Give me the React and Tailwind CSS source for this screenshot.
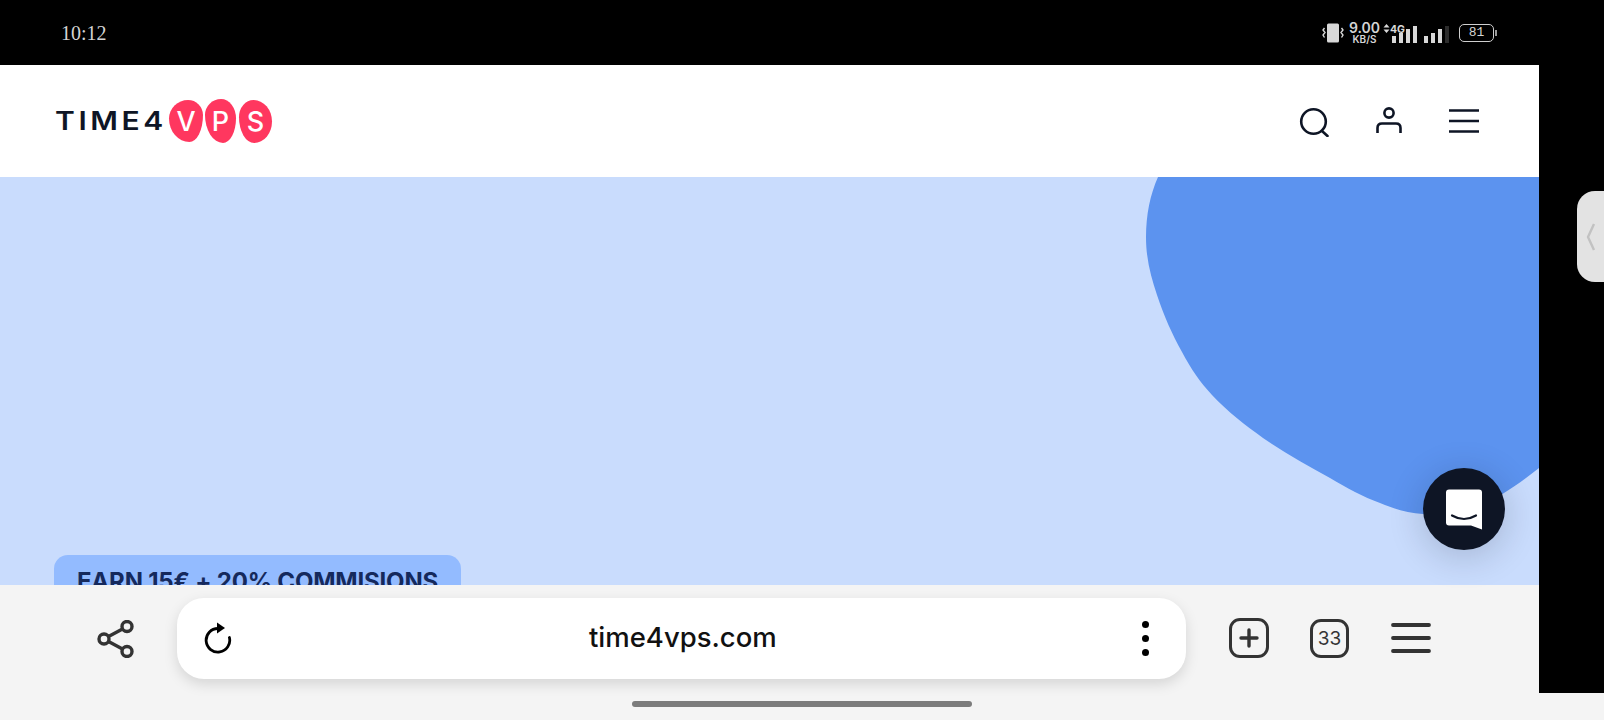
import React from "react";

const inter = "font-['Inter',sans-serif]";

const StatusIcons = () => (
  <div className="flex items-center text-[#d4d4d4] font-['Inter',sans-serif]">
    {/* vibrate */}
    <svg width="22" height="20" viewBox="0 0 22 20" fill="none" className="mr-[5px]">
      <rect x="5" y="0.5" width="12" height="19" rx="1.5" fill="#d8d8d8" />
      <path d="M2.5 5 L1 7 L3 9.5 L1 12 L2.5 14.5 M19.5 5 L21 7 L19 9.5 L21 12 L19.5 14.5" stroke="#d8d8d8" strokeWidth="1.4" />
    </svg>
    <div className="flex flex-col items-center w-[31px] mr-[3px]">
      <span className="text-[14px] font-semibold leading-[12px]">9.00</span>
      <span className="text-[10px] font-semibold leading-[10px]">KB/S</span>
    </div>
    <svg width="68" height="20" viewBox="0 0 68 20" className="mr-[8px]">
      <path d="M3.5 1 L6.5 4.5 H0.5 Z M3.5 10 L0.5 6.5 H6.5 Z" fill="#d8d8d8" />
      <text x="7" y="9.5" fontSize="10.5" fontWeight="700" fill="#d8d8d8" fontFamily="Inter, sans-serif">4G</text>
      <rect x="9" y="13" width="4" height="7" fill="#d8d8d8" />
      <rect x="16" y="10" width="4" height="10" fill="#d8d8d8" />
      <rect x="23" y="6" width="4" height="14" fill="#d8d8d8" />
      <rect x="30" y="3" width="4" height="17" fill="#d8d8d8" />
      <rect x="41" y="13" width="4" height="7" fill="#d8d8d8" />
      <rect x="48" y="10" width="4" height="10" fill="#d8d8d8" />
      <rect x="55" y="6" width="4" height="14" fill="#d8d8d8" />
      <rect x="62" y="3" width="4" height="17" fill="#2c2c2c" />
    </svg>
    <div className="flex items-center">
      <div className="flex items-center justify-center w-[35px] h-[18px] rounded-[5px] border-[1.5px] border-[#cfcfcf] text-[13px] font-['Liberation_Mono',monospace] leading-none">81</div>
      <div className="w-[2px] h-[6px] bg-[#9a9a9a] ml-[1px]" />
    </div>
  </div>
);

const Logo = () => (
  <div className={`flex items-center ${inter}`}>
    <span className="w-[114px] text-[25px] font-semibold tracking-[3px] text-[#0e1525] leading-none whitespace-nowrap origin-left scale-x-[1.2]">TIME4</span>
    <div className="flex items-center text-white text-[27px] font-medium leading-none">
      <div className="flex items-center justify-center w-[34px] h-[42px] bg-[#ff375f] rounded-[56%_44%_40%_60%/44%_36%_64%_56%]">V</div>
      <div className="flex items-center justify-center w-[31px] h-[44px] ml-[2px] bg-[#ff375f] rounded-[52%_48%_42%_58%/36%_44%_56%_64%]">P</div>
      <div className="flex items-center justify-center w-[33px] h-[43px] ml-[3px] bg-[#ff375f] rounded-[44%_56%_54%_46%/40%_50%_50%_60%]">S</div>
    </div>
  </div>
);

const Header = () => (
  <header className="h-[112px] bg-white flex items-center justify-between pl-[55px] pr-[60px]">
    <Logo />
    <div className="flex items-center gap-[46px]">
      <svg width="30" height="30" viewBox="0 0 30 30" fill="none" stroke="#0e1525" strokeWidth="2.6" className="mt-[1px]">
        <circle cx="14.5" cy="14.5" r="12.3" />
        <path d="M23 24 L28.5 29" strokeLinecap="round" />
      </svg>
      <svg width="28" height="32" viewBox="0 0 28 32" fill="none" stroke="#0e1525" strokeWidth="2.6">
        <circle cx="14" cy="8" r="4.6" />
        <path d="M2.5 28 V23 Q2.5 18.5 7 18.5 H21 Q25.5 18.5 25.5 23 V28" />
      </svg>
      <svg width="30" height="26" viewBox="0 0 30 26" fill="none" stroke="#0e1525" strokeWidth="2.6">
        <path d="M0 2.5 H30 M0 13 H30 M0 23.5 H30" />
      </svg>
    </div>
  </header>
);

const Hero = () => (
  <section className="relative h-[408px] bg-[#c9dcfd] overflow-hidden pt-[378px] pl-[54px]">
    <svg className="absolute top-0 left-0" width="1539" height="408" viewBox="0 0 1539 408">
      <path
        d="M1158 0 C1150 18 1146 38 1146 60 C1146 82 1151 100 1157 118 C1164 139 1172 157 1182 175 C1191 192 1200 205 1212 218 C1228 235 1245 248 1263 261 C1285 276 1308 289 1330 301 C1347 311 1363 320 1380 326 C1394 332 1408 336 1423 337 C1440 339 1460 338 1475 332 C1500 320 1520 306 1539 291 L1539 0 Z"
        fill="#5c93ef"
      />
    </svg>
    <div className={`relative w-[407px] h-[60px] rounded-t-[14px] bg-[#93bbff] pt-[11px] text-center text-[24px] font-bold tracking-[-0.2px] leading-[32px] text-[#15295c] whitespace-nowrap ${inter}`}>
      EARN 15€ + 20% COMMISIONS
    </div>
  </section>
);

const Toolbar = () => (
  <div className="relative h-[108px] bg-[#f4f4f4] flex items-center">
    <svg width="38" height="38" viewBox="0 0 38 38" fill="none" stroke="#333" strokeWidth="3.4" className="ml-[97px] mr-[42px]">
      <circle cx="7" cy="19" r="5" />
      <circle cx="30" cy="6.5" r="5" />
      <circle cx="30" cy="31.5" r="5" />
      <path d="M11.5 16.5 L25.5 9 M11.5 21.5 L25.5 29" />
    </svg>
    <div className="relative w-[1009px] h-[81px] mt-[-2px] bg-white rounded-[27px] shadow-[0_5px_14px_rgba(0,0,0,0.13)] flex items-center justify-between pl-[27px] pr-[37px]">
      <svg width="28" height="32" viewBox="0 0 28 32" fill="none">
        <path d="M14 6.5 A11.8 11.8 0 1 0 25.4 15.5" stroke="#000" strokeWidth="2.8" strokeLinecap="round" />
        <path d="M13 0.5 L21 6 L13 11.5 Z" fill="#000" />
      </svg>
      <span className="absolute left-[412px] text-[27.5px] font-medium leading-none text-[#111] font-['Inter',sans-serif]">time4vps.com</span>
      <div className="flex flex-col gap-[7px]">
        <span className="block w-[7px] h-[7px] rounded-full bg-black" />
        <span className="block w-[7px] h-[7px] rounded-full bg-black" />
        <span className="block w-[7px] h-[7px] rounded-full bg-black" />
      </div>
    </div>
    <div className="flex items-center mt-[-2px] ml-[43px]">
      <div className="flex items-center justify-center w-[40px] h-[40px] rounded-[11px] border-[3px] border-[#333] text-[#333]">
        <svg width="22" height="22" viewBox="0 0 22 22" stroke="#333" strokeWidth="3.4" strokeLinecap="round">
          <path d="M11 3 V19 M3 11 H19" />
        </svg>
      </div>
      <div className={`flex items-center justify-center w-[39px] h-[39px] ml-[41px] rounded-[11px] border-[3px] border-[#333] text-[19px] text-[#333] leading-none ${inter}`}>33</div>
      <svg width="40" height="30" viewBox="0 0 40 30" stroke="#333" strokeWidth="3.8" strokeLinecap="round" className="ml-[42px]">
        <path d="M2 2 H38 M2 15 H38 M2 28 H38" />
      </svg>
    </div>
  </div>
);

const ChatButton = () => (
  <div className="absolute left-[1423px] top-[468px] w-[82px] h-[82px] rounded-full bg-[#0e1525] shadow-[0_6px_36px_rgba(14,21,37,0.2)] flex items-center justify-center">
    <svg width="36" height="41" viewBox="0 0 36 41">
      <path d="M3 0.5 H33 Q36 0.5 36 3.5 V40.5 L25 36.5 H3 Q0 36.5 0 33.5 V3.5 Q0 0.5 3 0.5 Z" fill="#fff" />
      <path d="M6 26.5 Q18 33.5 30 26.5" fill="none" stroke="#0e1525" strokeWidth="2.2" strokeLinecap="round" />
    </svg>
  </div>
);

export default function App() {
  return (
    <div className="relative w-[1604px] h-[720px] overflow-hidden bg-black">
      {/* Status bar */}
      <div className="h-[65px] bg-black flex items-center justify-between pl-[61px] pr-[107px]">
        <span className="text-[20px] leading-none text-[#d4d4d4] font-['Liberation_Serif',serif]">10:12</span>
        <StatusIcons />
      </div>

      {/* Browser page */}
      <div className="flex h-[628px]">
        <div className="w-[1539px]">
          <Header />
          <Hero />
          <Toolbar />
        </div>
        <div className="flex-1 bg-black" />
      </div>

      {/* Gesture strip */}
      <div className="h-[27px] bg-[#f4f4f4] flex justify-center pt-[8px]">
        <div className="w-[340px] h-[6px] rounded-full bg-[#7c7c7c]" />
      </div>

      <ChatButton />

      {/* Side panel handle */}
      <div className="absolute right-0 top-[191px] w-[27px] h-[91px] bg-[#e3e3e3] rounded-l-[18px] flex items-center pl-[9px]">
        <svg width="10" height="28" viewBox="0 0 10 28" fill="none" stroke="#c2c2c2" strokeWidth="2.4">
          <path d="M8 1 L2 14 L8 27" />
        </svg>
      </div>
    </div>
  );
}
